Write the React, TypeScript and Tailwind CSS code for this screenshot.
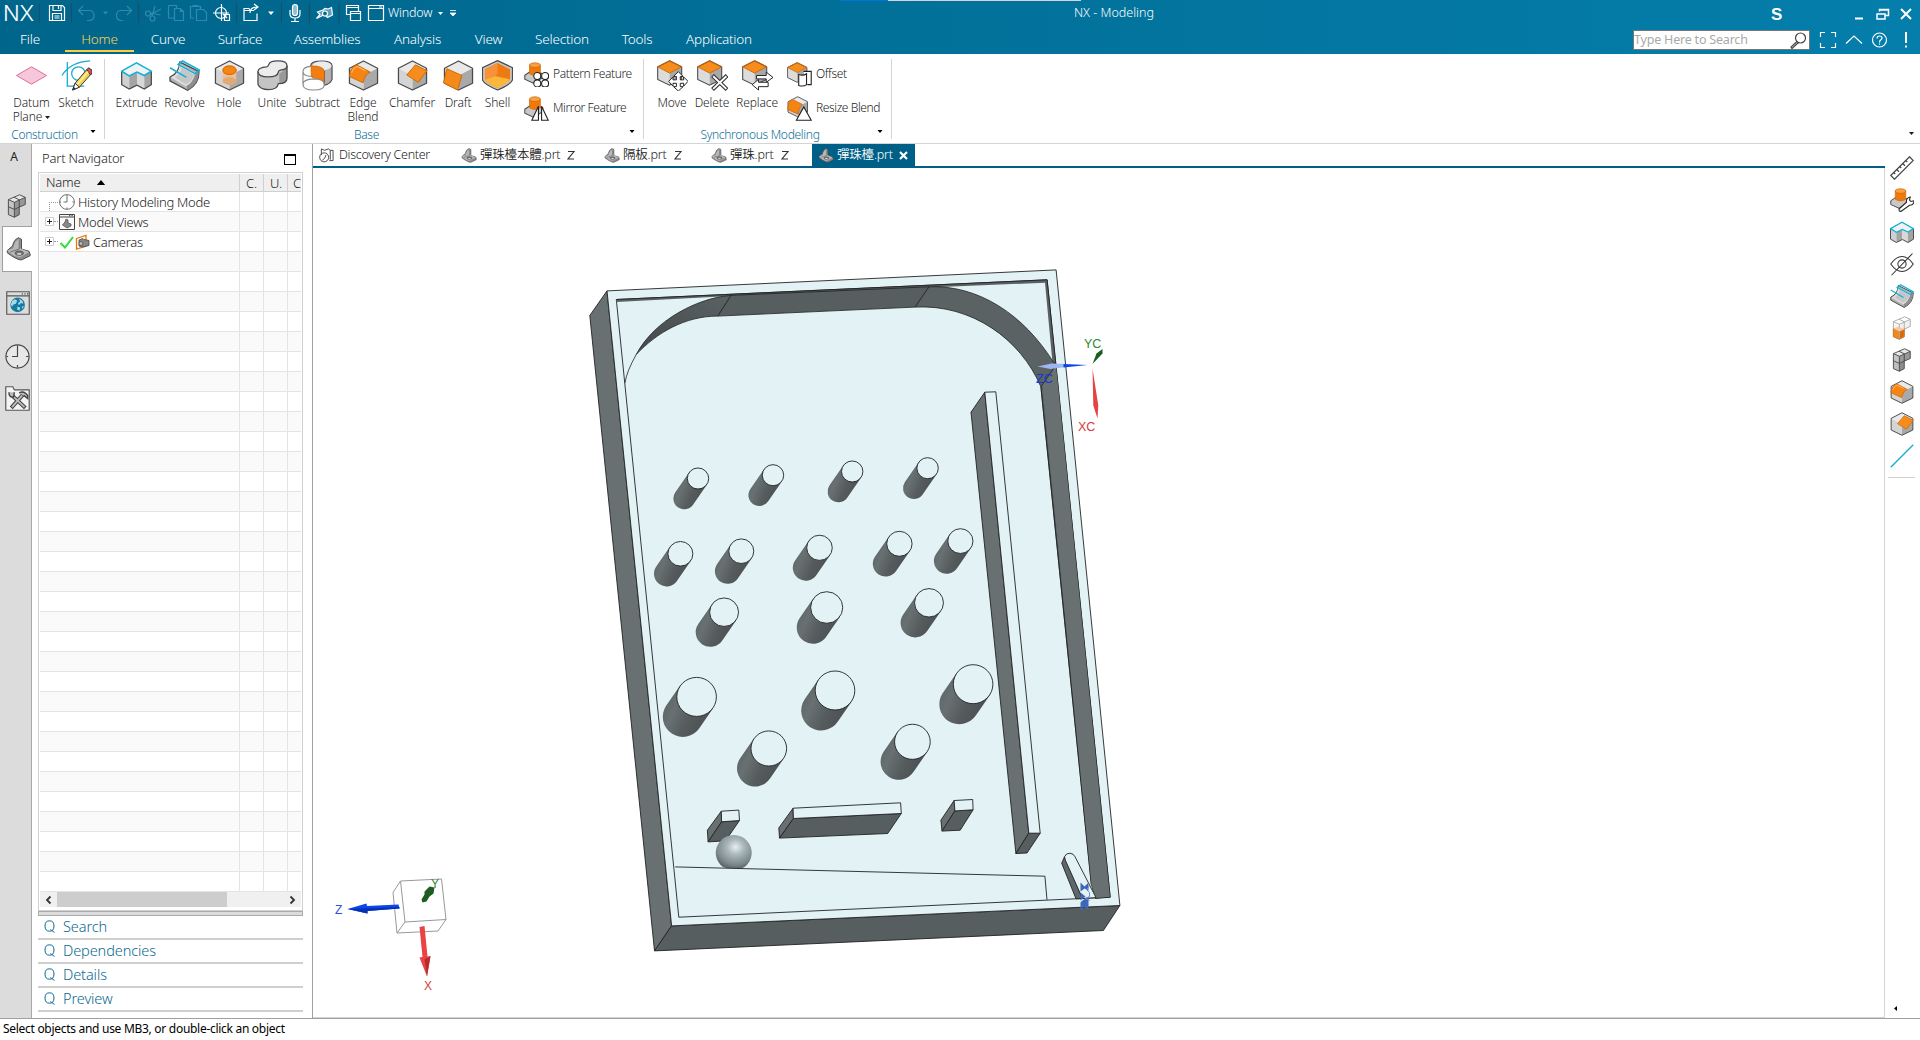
import React from "react";

type P = { className?: string };

const EDGE = "#4a4a4a";

/* ---------- icon building blocks (32 x 32 grid) ---------- */

function Cube({ top = "#e9e9e9", left = "#d4d4d4", right = "#a9a9a9" }: { top?: string; left?: string; right?: string }) {
  return (
    <g strokeLinejoin="round">
      <path d="M16 1L30.5 8.5 16 16 1.5 8.5Z" fill={top} />
      <path d="M1.5 8.5L16 16V31L1.5 24Z" fill={left} />
      <path d="M30.5 8.5L16 16V31L30.5 24Z" fill={right} />
      <path d="M16 1L30.5 8.5V24L16 31 1.5 24V8.5Z" fill="none" stroke={EDGE} strokeWidth="1.3" />
    </g>
  );
}

function Svg({ className, children, box = "0 0 32 32" }: P & { children: React.ReactNode; box?: string }) {
  return (
    <svg viewBox={box} className={className} fill="none">
      {children}
    </svg>
  );
}

const DatumIcon = ({ className }: P) => (
  <Svg className={className}>
    <path d="M.5 16L16 7 31.500 16 16 25Z" fill="#f6c6da" stroke="#e06a96" />
  </Svg>
);
const SketchIcon = ({ className }: P) => (
  <Svg className={className}>
    <g stroke="#19a8cf" strokeWidth="1.3">
      <path d="M6.5 2V27H24M1 16Q10 2 30 1" />
      <circle cx="18" cy="14" r="7" />
    </g>
    <path d="M12 31L14.500 24 26.500 10 31.500 14 19 28Z" fill="#f5d04c" stroke="#333" />
    <path d="M26.500 10L28.500 8 32 10.500V13.500L30.500 15.500Z" fill="#e04b4b" stroke="#333" />
    <path d="M12 31L14.500 24 19 28Z" fill="#fff" stroke="#333" />
    <path d="M12 31l1.500-3 1.500 1.500z" fill="#222" />
    <path d="M17 25L28 12" stroke="#fff3b0" strokeWidth="1.500" />
  </Svg>
);
const ExtrudeIcon = ({ className }: P) => (
  <Svg className={className}>
    <path d="M.5 11.500L16 3 31.500 11.500 24 16 16.500 12.500 8.500 16.500Z" fill="#f2f2f2" />
    <path d="M.5 11.500L8.500 16.500V30L.5 25.500Z" fill="#d0d0d0" />
    <path d="M8.500 16.500L16.500 12.500V26L8.500 30Z" fill="#a4a4a4" />
    <path d="M16.500 12.500L24 16V30L16.500 26Z" fill="#d8d8d8" />
    <path d="M24 16L31.500 11.500V25.500L24 30Z" fill="#a4a4a4" />
    <path d="M.7 12V25.500L8.500 30 16.500 26 24 30 31.300 25.500V12" stroke={EDGE} strokeWidth="1.300" />
    <path d="M.7 11.500L16 3 31.300 11.500 24 16 16.500 12.500 8.500 16.500Z" stroke="#10b0d8" strokeWidth="1.600" />
  </Svg>
);
const RevolveIcon = ({ className }: P) => (
  <Svg className={className}>
    <path d="M11 2L31 12Q31 25 19 31.300L1 21.500V17.500Q11 13 11 2Z" fill="#b4b4b4" stroke={EDGE} strokeWidth="1.300" strokeLinejoin="round" />
    <path d="M11 4L27 13Q24 25 17.500 27L2 18Q11 14 11 4Z" fill="#e0e0e0" />
    <path d="M13 8L26 15Q23 24 17 25L6 18Q12 14 13 8Z" fill="#c6c6c6" />
    <path d="M28 13Q25 24 18.500 26.500V31Q31 25 30.500 12Z" fill="#8d8d8d" />
    <path d="M9.500 4.500L14 1 31.500 10.500 27 14ZM1 8L18 18" stroke="#10b0d8" strokeWidth="1.600" />
  </Svg>
);
const HoleIcon = ({ className }: P) => (
  <Svg className={className}>
    <Cube />
    <path d="M9 10.500V23q7 5.500 14 0V10.500z" fill="#eebf94" />
    <path d="M9 20V23q7 5.500 14 0V20q-7-5-14 0z" fill="#e0aa78" />
    <ellipse cx="16" cy="10.500" rx="7" ry="4.500" fill="#f68512" stroke="#c96300" />
  </Svg>
);
const UniteIcon = ({ className }: P) => (
  <Svg className={className}>
    <path d="M1 12V25q5 6 13 5.500 7-.5 9-6 8-.5 8-6V5z" fill="#c4c4c4" />
    <path d="M23 14v10.500q8-.5 8-6V6q-2 5-8 8z" fill="#999" />
    <path
      d="M1 12q0-4.500 9-5 2-.5 2-2 1-4 9.500-4 9.500 0 9.500 5 0 4-7 4.500-2 .5-2 2-.5 5-10.500 5T1 12z"
      fill="#ececec"
      stroke={EDGE}
      strokeWidth="1.300"
    />
    <path d="M1 12V25q2 5.500 11 5.500 9 0 10-6 9 0 9-6V6" stroke={EDGE} strokeWidth="1.300" />
  </Svg>
);
const SubtractIcon = ({ className }: P) => (
  <Svg className={className}>
    <path d="M9 6q0-5 11-5t11 5V20q-2 5-8 6V12H9z" fill="#b0b0b0" stroke={EDGE} strokeWidth="1.200" />
    <ellipse cx="20.500" cy="6" rx="10" ry="4.500" fill="#ececec" />
    <path d="M9 6q14 0 14 6V26q0-5-5-6-9 0-9-4z" fill="#f37d10" stroke="#c96300" strokeWidth=".6" />
    <path d="M1 12q0-5 8-5.500V16q0 3 6 3.500 8 1 8 6-1 5.500-11 5.500T1 25z" fill="#fff" />
    <path d="M9 6.500Q1 7 1 12V25q0 6 11 6t11-5.500M1 12q0 5 11 5M1 25q0-5 11-5.500 11 0 11 6" stroke="#8a8a8a" strokeWidth="1.200" />
  </Svg>
);
const EdgeBlendIcon = ({ className }: P) => (
  <Svg className={className}>
    <Cube />
    <path d="M1.500 15.500Q3 7 9 5L23 12.500Q17.500 14.500 15.500 23.500L1.500 17Z" fill="#f68412" stroke="#c96300" strokeWidth=".9" />
    <path d="M3.500 13.500Q5.500 8 9.500 6.700L18 11" stroke="#ffb25c" strokeWidth="1.300" />
  </Svg>
);
const ChamferIcon = ({ className }: P) => (
  <Svg className={className}>
    <Cube />
    <path d="M10 15.500L19 5 31 11 22 23Z" fill="#f68c1e" stroke="#d06a00" />
  </Svg>
);
const DraftIcon = ({ className }: P) => (
  <Svg className={className}>
    <Cube />
    <path d="M4 9L19.500 16 15 31 .5 23.500Z" fill="#f58a1c" stroke="#d06a00" />
  </Svg>
);
const ShellIcon = ({ className }: P) => (
  <Svg className={className}>
    <path d="M16 .7L31.500 8V20.500Q30 25 16 31 2 25 .5 20.500V8Z" fill="#c8c8c8" stroke={EDGE} strokeWidth="1.300" />
    <path d="M16 3L29 9.500V20Q27 24 16 29 5 24 3 20V9.500Z" fill="#ee7a12" />
    <path d="M3 20L13 16.500 29 20Q27 24 16 29 5 24 3 20Z" fill="#fbb63c" />
    <path d="M16 3V14q-2 4-13 6V9.500z" fill="#f8923a" />
  </Svg>
);
const Base = () => (
  <g>
    <path d="M1 17L10 11 24 15V20L12 27 1 22Z" fill="#c8c8c8" stroke={EDGE} strokeWidth="1.300" />
    <path d="M7 4q7-4.500 14 0V15q-7 4.500-14 0z" fill="#f0790c" stroke="#c96300" strokeWidth=".8" />
    <ellipse cx="14" cy="4" rx="7" ry="3" fill="#f9a044" stroke="#c96300" strokeWidth=".8" />
  </g>
);
const PatternIcon = ({ className }: P) => (
  <Svg className={className}>
    <Base />
    <g fill="#fff" stroke="#222" strokeWidth="1.400">
      <circle cx="17" cy="18" r="4.500" />
      <circle cx="27" cy="18" r="4.500" />
      <circle cx="17" cy="27.500" r="4.500" />
      <circle cx="27" cy="27.500" r="4.500" />
    </g>
  </Svg>
);
const MirrorIcon = ({ className }: P) => (
  <Svg className={className}>
    <Base />
    <path d="M10 31L18.500 13V31ZM31 31L22.500 13V31Z" fill="#fff" stroke="#222" strokeWidth="1.400" />
  </Svg>
);
const OrangeCube = () => (
  <g>
    <path d="M13 1L25.500 7 13 13.500.7 7Z" fill="#f68c1c" />
    <path d="M.7 7L13 13.500V26L.7 20Z" fill="#dcdcdc" />
    <path d="M25.500 7L13 13.500V26L25.500 20Z" fill="#a8a8a8" />
    <path d="M13 .8L25.500 7V20L13 26 .7 20V7Z" stroke={EDGE} strokeWidth="1.100" />
    <path d="M13 .8L25.500 7 13 13.500.7 7Z" stroke="#cf6600" />
  </g>
);
const MoveIcon = ({ className }: P) => (
  <Svg className={className}>
    <OrangeCube />
    <path d="M22 12l5 5h-3v3.500h3.500v-3L32 22l-4.500 5v-3H24v3.500h3L22 32l-5-4.500h3V24h-3.500v3L12 22l4.500-4.500v3H20V17h-3z" fill="#fff" stroke="#222" />
  </Svg>
);
const DeleteIcon = ({ className }: P) => (
  <Svg className={className}>
    <OrangeCube />
    <path d="M16 16L31 30.500M31 16L16 30.500" stroke="#333" strokeWidth="4.200" />
    <path d="M16.700 16.700L30.300 29.800M30.300 16.700L16.700 29.800" stroke="#fff" strokeWidth="2" />
  </Svg>
);
const ReplaceIcon = ({ className }: P) => (
  <Svg className={className}>
    <OrangeCube />
    <path d="M15 16h10v-3.500l7 5.500-7 5v-3.500H15z" fill="#fff" stroke="#222" />
    <path d="M27 23H17v-3l-6.500 5.500L17 31v-3.500h10z" fill="#fff" stroke="#222" />
  </Svg>
);
const OffsetIcon = ({ className }: P) => (
  <Svg className={className}>
    <OrangeCube />
    <path d="M21 12h10v17l-5 0M15 16q6 2 10-1v14q-4 3-10 1z" fill="#fff" stroke="#222" strokeWidth="1.400" />
  </Svg>
);
const ResizeIcon = ({ className }: P) => (
  <Svg className={className}>
    <g transform="scale(.86)">
      <Cube />
      <path d="M1.500 17Q2 8 8 5L23 12.500Q17 17 16.500 27L1 20Z" fill="#f68412" stroke="#c96300" />
    </g>
    <path d="M12 31L21.500 14 31 31Z" fill="#fff" stroke="#222" strokeWidth="1.400" />
  </Svg>
);

/* three stacked boxes: two on top, one below */
const BlocksIcon = ({ className, ghost = false }: P & { ghost?: boolean }) => {
  const line = ghost ? "#a8a8a8" : "#454545";
  return (
    <Svg className={className}>
      <g strokeLinejoin="round">
        <path d="M4.500 17L12.500 20.500V31L4.500 27.500Z" fill={ghost ? "#f6861a" : "#bdbdbd"} />
        <path d="M12.500 20.500L19 17.500V27.500L12.500 31Z" fill={ghost ? "#dd6a00" : "#8d8d8d"} />
        <path d="M4.500 7.500L12.500 11V20.500L4.500 17Z" fill={ghost ? "#f6f6f6" : "#c4c4c4"} />
        <path d="M12.500 11L27 4.500V14L19 17.500 12.500 20.500Z" fill={ghost ? "#f1f1f1" : "#989898"} />
        <path d="M4.500 7.500L19.500 1 27 4.500 12.500 11Z" fill={ghost ? "#fff" : "#e6e6e6"} />
        <path
          d="M4.500 7.500L19.500 1 27 4.500V14L19 17.500V27.500L12.500 31 4.500 27.500ZM4.500 7.500L12.500 11 27 4.500M12.500 11V31M4.500 17L12.500 20.500 19 17.500V8M12 4.300L19.500 8"
          stroke={line}
          strokeWidth="1.200"
        />
        {ghost && <path d="M4.500 17L12.500 20.500 19 17.500V27.500L12.500 31 4.500 27.500Z" stroke="#d06a00" />}
        {ghost && <path d="M4.500 17L11 14 19 17.500 12.500 20.500Z" fill="#f8c79a" />}
      </g>
    </Svg>
  );
};
const PartIcon = ({ className }: P) => (
  <Svg className={className}>
    <path d="M1 18L8 12Q10 3 16 1l4 2v13l10 3 1.500 4V25L20 30.500Q14 31 1 21Z" fill="#8c8c8c" stroke="#4f4f4f" strokeWidth="1.300" />
    <path d="M1 18L9 15Q11 4 18 2v13L30 20 18 27Q10 27 1 18Z" fill="#b9b9b9" />
    <path d="M17 3v13L5 20" stroke="#666" strokeWidth="1.200" />
    <ellipse cx="17" cy="21.500" rx="5.500" ry="2.800" fill="#777" stroke="#444" />
    <ellipse cx="17" cy="22.500" rx="3" ry="1.300" fill="#ddd" />
  </Svg>
);
const GlobeIcon = ({ className }: P) => (
  <Svg className={className}>
    <path d="M1 1h30v30H1zM1 6.500h30" stroke="#555" strokeWidth="1.500" />
    <path d="M21 3.800h1.500m2 0H26m2 0h1.500" stroke="#444" strokeWidth="1.500" />
    <circle cx="15.500" cy="18.500" r="9.700" fill="#1779a0" />
    <path d="M8 13l4-2 3 2-2 4-3 1-2 3-1.500-3zM17 10l5 3 1 4-3-1-3 3-1-3 3-2zM15 21l4 1-1 4-3-1zM21 21l3-1-2 4z" fill="#a9d8e6" />
  </Svg>
);
const ClockIcon = ({ className }: P) => (
  <Svg className={className}>
    <circle cx="16" cy="16" r="14.800" fill="#fff" fillOpacity=".35" stroke="#444" strokeWidth="1.500" />
    <path d="M16 2v14H9M16 27v3M27 16h3M2 16h2" stroke="#444" strokeWidth="1.500" />
  </Svg>
);
const ToolsIcon = ({ className }: P) => (
  <Svg className={className}>
    <path d="M1 5V1h9l2 4h19v26H1z" fill="#f4f4f4" stroke="#555" strokeWidth="1.500" />
    <path d="M8 11L26 28M23 11L8 28" stroke="#444" strokeWidth="5" />
    <path d="M9 12L25 27M22 12L9 27" stroke="#bbb" strokeWidth="2.400" />
    <path d="M5 8q0 7 6 6l1-6M18 9q6-4 11 3v4l-5-4" stroke="#444" strokeWidth="1.800" fill="#bbb" />
  </Svg>
);
const RulerIcon = ({ className }: P) => (
  <Svg className={className}>
    <path d="M1 26L26 1 31 6 6 31Z" stroke="#444" strokeWidth="1.600" fill="#fff" />
    <path d="M5 22l2 2M9 18l3 3M13 14l2 2M17 10l3 3M21 6l2 2" stroke="#444" strokeWidth="1.500" />
  </Svg>
);
const EyeIcon = ({ className }: P) => (
  <Svg className={className}>
    <path d="M1 16Q8 6 16 6t15 10Q24 26 16 26T1 16ZM2 31L30 2" stroke="#333" strokeWidth="1.400" />
    <circle cx="16" cy="16" r="5.500" stroke="#333" strokeWidth="1.400" />
  </Svg>
);
const WrenchIcon = ({ className }: P) => (
  <Svg className={className}>
    <Base />
    <path d="M12 28L22 19q-1-6 5-7l-1 4 2 2 4-1q0 6-6 6L15 31q-3 1-3-3z" fill="#fff" stroke="#222" strokeWidth="1.400" />
  </Svg>
);
const LineIcon = ({ className }: P) => (
  <Svg className={className}>
    <path d="M1 31L31 1" stroke="#10a8d8" strokeWidth="1.600" />
  </Svg>
);

const Caret = ({ className }: P) => (
  <svg viewBox="0 0 5 3" className={className}>
    <path d="M0 0H5L2.500 3Z" fill="currentColor" />
  </svg>
);

/* ---------- quick access toolbar ---------- */

const Sep = () => <i className="h-5 w-px shrink-0 bg-[#1c4f66]" />;

function QuickBar() {
  return (
    <div className="flex h-[26px] items-center text-white">
      <span className="w-[39px] pl-[3px] font-['Inter'] text-[22px] leading-[27px] font-light tracking-[-0.3px]">NX</span>
      <Sep />
      <svg viewBox="0 0 382 24" className="h-6 w-[382px] shrink-0" fill="none" stroke="currentColor" strokeWidth="1.200">
        <path d="M9.500 4.500h13l2 2v13h-15zM13 4.500v5h8v-5M12.500 19v-6.500h9V19M14.500 15h5M14.500 17h5M18.500 5v3" />
        <path d="M31.500 2v20" stroke="#1c4f66" />
        <g stroke="#2f8aae">
          <path d="M43 5l-4.500 4.500L43 14M39 9.500h10q5 0 5 5t-5 5h-2M87 5l4.500 4.500L87 14M91 9.500H81q-4.500 0-4.500 5t5 5H83" />
          <circle cx="108" cy="12.500" r="2.500" />
          <circle cx="112.500" cy="17.500" r="2.500" />
          <path d="M110 14l11-6M112 15l3-10M110.500 12l10 2" />
          <path d="M128.500 4.500h8v3M134 17h-5.500V4.500M134.500 7.500h6l3 3v9h-9zM140.500 7.500v3h3M154 17h-3.500V5.500h10v3M153 6V4.500h5V6M156.500 8.500h7l3 3v8h-10z" />
        </g>
        <path d="M63 10.500h5l-2.500 3z" fill="#2f8aae" stroke="none" />
        <path d="M98.500 2v20" stroke="#1c4f66" />
        <circle cx="181" cy="12" r="5.500" />
        <path d="M181.500 3v17M173 12h16M184.500 13.500h5v6h-5zM183 13l4 4" />
        <path d="M196.500 2v20" stroke="#1c4f66" />
        <path d="M214 9.500h-10v10h13v-7M204 9V7.500h5L210 9M210 12q0-6 7-6M214 3l4 3-4 3" />
        <path d="M228 10.500h6l-3 3.500z" fill="#fff" stroke="none" />
        <path d="M241.500 2v20" stroke="#1c4f66" />
        <rect x="252.500" y="3.500" width="5" height="11" rx="2.500" fill="#8fc0d2" />
        <path d="M250 9v4q0 4 5 4t5-4V9M255 17v3M251 20.500h8" />
        <path d="M269.500 2v20" stroke="#1c4f66" />
        <path d="M276.500 17.500l3.500-4-2.500-2.500 5.500-2 2-1.500 3 .5 3.500-1.500 1 7.500-5 2.500-3-3-3 1.500z" fill="#5da0bb" />
        <circle cx="285" cy="12.500" r="2.500" fill="#02698f" />
        <path d="M299 2v20" stroke="#1c4f66" />
        <path d="M306.500 4.500h12v9h-12zM306 6.500h13" />
        <path d="M310.500 10.500h10v9h-10zM310 12.500h11" fill="#02698f" />
        <path d="M328.500 4.500h15v15h-15zM328 7.500h16M339 6h3" />
      </svg>
      <span className="-ml-[34px] w-[50px] text-[12.5px] font-light tracking-[-0.2px]">Window</span>
      <Caret className="h-[3px] w-[5px]" />
      <svg viewBox="0 0 6 6" className="ml-[7px] h-[6px] w-[6px]">
        <path d="M0 .5H6M0 3H6L3 6Z" stroke="#fff" fill="#fff" strokeWidth=".8" />
      </svg>
      <div className="ml-[384px] h-full w-[48px] shrink-0">
        <div className="h-px bg-[#0078d7]" />
      </div>
      <div className="h-full w-[193px] shrink-0">
        <div className="h-px bg-[#cfd6da]" />
      </div>
    </div>
  );
}

const menu: [string, string][] = [
  ["File", "w-[65px] pr-[5px]"],
  ["Home", "w-[69px] border-b-2 border-[#ffcd42] text-[#ffd04f]"],
  ["Curve", "w-[68px]"],
  ["Surface", "w-[76px]"],
  ["Assemblies", "w-[98px]"],
  ["Analysis", "w-[83px]"],
  ["View", "w-[59px]"],
  ["Selection", "w-[88px]"],
  ["Tools", "w-[62px]"],
  ["Application", "w-[102px]"],
];

function Header() {
  return (
    <header className="flex h-[54px] bg-linear-to-r from-[#00658b] to-[#057eab] text-white">
      <div className="w-[1081px] shrink-0">
        <QuickBar />
        <nav className="flex h-[26px]">
          {menu.map(([t, c]) => (
            <div key={t} className={`flex items-start justify-center pt-[3px] text-[13.5px] leading-[20px] font-[350] tracking-[-0.2px] ${c}`}>
              {t}
            </div>
          ))}
        </nav>
      </div>
      <div className="-ml-[7px] w-[559px] shrink-0 pt-[4px] text-[12.5px] font-[350] tracking-[0px]">NX - Modeling</div>
      <div className="w-[287px] shrink-0">
        <div className="flex h-[30px] items-center pb-[2px]">
          <b className="ml-[138px] w-[83px] pt-px font-['Liberation_Sans'] text-[17px]">S</b>
          <svg viewBox="0 0 62 16" className="h-4 w-[62px]" fill="none" stroke="#fff">
            <path d="M1 12.500h8" strokeWidth="2" />
            <path d="M25.500 5.500V3.500h9v6h-3M23 8h8v5h-8zM25 4h9.500" strokeWidth="1.500" />
            <path d="M47 3l10 10M57 3L47 13" strokeWidth="2" />
          </svg>
        </div>
        <div className="flex items-center">
          <div className="flex h-5 w-[177px] items-center justify-between border border-[#777] bg-white pr-[2px] text-[12.5px] tracking-[-0.2px] text-[#a9a9a9]">
            <span>Type Here to Search</span>
            <svg viewBox="0 0 17 17" className="h-[17px] w-[17px]" fill="none" stroke="#444" strokeWidth="1.200">
              <circle cx="10.500" cy="6" r="5" />
              <path d="M7 9.500L1 15l1 1.500 6.500-6" />
            </svg>
          </div>
          <svg viewBox="0 0 92 18" className="ml-[9px] h-[18px] w-[92px]" fill="none" stroke="#fff" strokeWidth="1.200">
            <path d="M1.500 6V1.500H6M12 1.500h4.500V6M16.500 12v4.500H12M6 16.500H1.500V12M27 12.500l8-7.500 8 7.500" />
            <circle cx="60.500" cy="9" r="7" />
            <path d="M58 7.500q0-2.500 2.500-2.500t2.500 2q0 1-1.300 2T60.500 11.500M60.500 12.500v1.300" />
            <path d="M87 1v11M87 14.500v2" strokeWidth="2" />
          </svg>
        </div>
      </div>
    </header>
  );
}

/* ---------- ribbon ---------- */

type Btn = { label: string; Icon: (p: P) => React.ReactElement; w: string; sub?: string; caret?: boolean };

function Big({ label, Icon, w, sub, caret }: Btn) {
  return (
    <div className={`flex shrink-0 flex-col items-center text-[12px] leading-[14px] font-[350] tracking-[-0.1px] whitespace-nowrap ${w}`}>
      <Icon className="mb-[5px] h-[31px] w-[31px] shrink-0" />
      <span>{label}</span>
      {sub && (
        <span className="flex items-center gap-[3px]">
          {sub}
          {caret && <Caret className="h-[3px] w-[5px]" />}
        </span>
      )}
    </div>
  );
}

function Small({ label, Icon }: { label: string; Icon: (p: P) => React.ReactElement }) {
  return (
    <div className="flex items-center gap-[4px] text-[12px] leading-[26px] font-[350] tracking-[-0.4px] whitespace-nowrap">
      <Icon className="h-[25px] w-[25px]" />
      {label}
    </div>
  );
}

function GroupLabel({ label, className }: { label: string; className: string }) {
  return (
    <div className="relative h-[14px] pt-[2px] text-center text-[12px] leading-[16px] font-[350] tracking-[-0.3px] text-[#0a6e96]">
      <span className={className}>{label}</span>
      <Caret className="absolute top-[5px] right-[8px] h-[3px] w-[6px] text-black" />
    </div>
  );
}

function Ribbon() {
  return (
    <section className="flex h-[90px] border-b-[1px] border-[#d4d4d4] bg-white pt-[5px] text-[#1c1c1c]">
      <div className="flex h-[80px] w-[105px] flex-col border-r border-[#d4d4d4]">
        <div className="flex h-[68px] pt-px pl-[10px]">
          <Big label="Datum" sub="Plane" caret Icon={DatumIcon} w="w-[43px]" />
          <Big label="Sketch" Icon={SketchIcon} w="w-[46px]" />
        </div>
        <GroupLabel label="Construction" className="mr-[15px]" />
      </div>
      <div className="flex h-[80px] w-[539px] flex-col border-r border-[#d4d4d4]">
        <div className="flex h-[68px] pt-px pl-[7px]">
          <Big label="Extrude" Icon={ExtrudeIcon} w="w-[49px]" />
          <Big label="Revolve" Icon={RevolveIcon} w="w-[47px]" />
          <Big label="Hole" Icon={HoleIcon} w="w-[42px]" />
          <Big label="Unite" Icon={UniteIcon} w="w-[44px]" />
          <Big label="Subtract" Icon={SubtractIcon} w="w-[47px]" />
          <Big label="Edge" sub="Blend" Icon={EdgeBlendIcon} w="w-[44px]" />
          <Big label="Chamfer" Icon={ChamferIcon} w="w-[54px]" />
          <Big label="Draft" Icon={DraftIcon} w="w-[38px]" />
          <Big label="Shell" Icon={ShellIcon} w="w-[41px]" />
          <div className="ml-[6px] flex flex-col gap-[8px] pt-px">
            <Small label="Pattern Feature" Icon={PatternIcon} />
            <Small label="Mirror Feature" Icon={MirrorIcon} />
          </div>
        </div>
        <GroupLabel label="Base" className="mr-[15px]" />
      </div>
      <div className="flex h-[80px] w-[248px] flex-col border-r border-[#d4d4d4]">
        <div className="flex h-[68px] pt-px pl-[5px]">
          <Big label="Move" Icon={MoveIcon} w="w-[46px]" />
          <Big label="Delete" Icon={DeleteIcon} w="w-[34px]" />
          <Big label="Replace" Icon={ReplaceIcon} w="w-[56px]" />
          <div className="ml-[2px] flex flex-col gap-[8px] pt-px">
            <Small label="Offset" Icon={OffsetIcon} />
            <Small label="Resize Blend" Icon={ResizeIcon} />
          </div>
        </div>
        <GroupLabel label="Synchronous Modeling" className="mr-[15px]" />
      </div>
      <Caret className="mt-[73px] mr-[6px] ml-auto h-[3px] w-[5px]" />
    </section>
  );
}

/* ---------- left side ---------- */

function ResourceBar() {
  return (
    <div className="flex w-[32px] shrink-0 flex-col items-center border-r border-[#a8a8a8] bg-[#dcdcdc]">
      <div className="mr-[3px] h-[50px] pt-[4px] text-[12px] leading-[18px]">A</div>
      <BlocksIcon className="ml-[5px] h-6 w-6 self-start" />
      <div className="mt-[8px] -mr-px flex h-[46px] w-[30px] items-center self-end border-y border-l border-[#a0a0a0] bg-white pl-[3px]">
        <PartIcon className="h-[24px] w-[25px]" />
      </div>
      <GlobeIcon className="mt-[19px] ml-[4px] h-6 w-6 shrink-0" />
      <ClockIcon className="mt-[29px] ml-[4px] h-[25px] w-[25px] shrink-0" />
      <ToolsIcon className="mt-[17px] ml-[4px] h-[25px] w-[25px] shrink-0" />
    </div>
  );
}

const Plus = () => (
  <svg viewBox="0 0 9 9" className="relative h-[9px] w-[9px] bg-white">
    <path d="M.5.500h8v8h-8z" stroke="#ccc" fill="#fff" />
    <path d="M2 4.500h5M4.500 2v5" stroke="#222" />
  </svg>
);

function TreeRow({ children, odd }: { children?: React.ReactNode; odd?: boolean }) {
  return (
    <div className={`flex h-5 shrink-0 border-b border-[#e4e4e4] text-[13px] leading-[18px] font-[350] tracking-[-0.3px] ${odd ? "bg-[#fafafa]" : "bg-white"}`}>
      <div className="flex w-[200px] items-center border-r border-[#e4e4e4]">{children}</div>
      <div className="w-[24px] border-r border-[#e4e4e4]" />
      <div className="w-[24px] border-r border-[#e4e4e4]" />
    </div>
  );
}

function Navigator() {
  return (
    <aside className="flex w-[281px] shrink-0 flex-col border-r border-[#a0a0a0] bg-white pl-[6px] text-[#1c1c1c]">
      <div className="flex h-[28px] items-center justify-between pt-[2px] pr-[16px] pl-[4px] text-[13px] font-[350] tracking-[-0.2px]">
        <span>Part Navigator</span>
        <i className="h-[11px] w-[12px] border border-t-2 border-black" />
      </div>
      <div className="flex h-[739px] w-[265px] flex-col overflow-hidden border border-[#d0d0d0] p-px">
        <div className="flex h-[18px] shrink-0 items-center border-b border-[#d0d0d0] bg-[#efefef] text-[13px] font-[350] tracking-[-0.2px]">
          <div className="flex h-full w-[200px] items-center border-r border-[#d0d0d0] pl-[6px]">
            Name
            <svg viewBox="0 0 10 6" className="ml-[16px] h-[5px] w-[10px]">
              <path d="M0 6L5 0 10 6Z" />
            </svg>
          </div>
          <div className="h-full w-[24px] border-r border-[#d0d0d0] pl-[6px] leading-[18px]">C.</div>
          <div className="h-full w-[24px] border-r border-[#d0d0d0] pl-[6px] leading-[18px]">U.</div>
          <div className="h-full w-[13px] overflow-hidden pl-[5px] leading-[18px]">C</div>
        </div>
        <div className="flex flex-1 flex-col overflow-hidden">
          <TreeRow>
            <i className="ml-[9px] h-[9px] w-[9px] translate-y-[5px] border-t border-l border-dotted border-[#999]" />
            <ClockIcon className="mr-[3px] ml-[1px] h-4 w-4" />
            History Modeling Mode
          </TreeRow>
          <TreeRow odd>
            <span className="ml-[5px]">
              <Plus />
            </span>
            <i className="mr-px w-[4px] border-t border-dotted border-[#999]" />
            <svg viewBox="0 0 16 16" className="mr-[3px] h-4 w-4" fill="none">
              <path d="M.5.500h15v15H.5zM.5 3h15" stroke="#444" />
              <path d="M3.500 11L6 8l1-3 2 1v3l3 1v2L8 14z" fill="#888" stroke="#555" strokeWidth=".8" />
              <path d="M10 1.700h4" stroke="#444" strokeDasharray="1 .6" />
            </svg>
            Model Views
          </TreeRow>
          <TreeRow>
            <span className="ml-[5px]">
              <Plus />
            </span>
            <i className="mr-px w-[4px] border-t border-dotted border-[#999]" />
            <svg viewBox="0 0 31 16" className="mr-[3px] h-4 w-[31px]" fill="none">
              <path d="M1.500 9L6 13.500 14 3" stroke="#2fdc3a" strokeWidth="2" />
              <path d="M17.500 4.500L27 1.500V12l-9.500 3z" stroke="#ee7410" strokeWidth="1.300" />
              <path d="M20 6l4-1.500 1 1 5 1v5L24 13l-4-1z" fill="#888" stroke="#444" strokeWidth=".8" />
              <circle cx="22" cy="9.500" r="2" fill="#bbb" stroke="#444" strokeWidth=".7" />
            </svg>
            Cameras
          </TreeRow>
          {Array.from({ length: 32 }, (_, i) => (
            <TreeRow key={i} odd={i % 2 === 0} />
          ))}
        </div>
        <div className="mb-[2px] flex h-[15px] shrink-0 items-center bg-[#f0f0f0] text-[#444]">
          <svg viewBox="0 0 16 14" className="h-[14px] w-[17px]" fill="none">
            <path d="M10 3.500L6.500 7l3.500 3.500" stroke="#333" strokeWidth="1.800" />
          </svg>
          <i className="h-full w-[170px] bg-[#cdcdcd]" />
          <svg viewBox="0 0 16 14" className="ml-auto h-[14px] w-[17px]" fill="none">
            <path d="M6 3.500L9.500 7 6 10.500" stroke="#333" strokeWidth="1.800" />
          </svg>
        </div>
      </div>
      <div className="h-[5px] w-[265px] border border-[#ababab] bg-[#dcdcdc]" />
      {["Search", "Dependencies", "Details", "Preview"].map((t) => (
        <div
          key={t}
          className="flex h-6 w-[265px] items-center gap-[7px] border-b-2 border-[#cfcfcf] pb-px pl-[6px] text-[14.5px] leading-[21px] font-[350] tracking-[-0.1px] text-[#0b6a91]"
        >
          <svg viewBox="0 0 12 13" className="h-[13px] w-[12px]" fill="none" stroke="#0b6a91">
            <path d="M5.500.8q4.500 0 4.500 5.200T5.500 11.200 1 6 5.500.8zM6.500 9.500l4 3" />
          </svg>
          {t}
        </div>
      ))}
    </aside>
  );
}

/* ---------- document tabs ---------- */

function DocTab({ title, w, active }: { title: string; w: string; active?: boolean }) {
  return (
    <div className={`flex h-[22px] items-center gap-[3px] pl-[6px] ${w} ${active ? "bg-[#005f87] text-white" : ""}`}>
      <PartIcon className="h-[15px] w-[16px] shrink-0" />
      <span className="whitespace-nowrap">{title}</span>
      {active ? (
        <svg viewBox="0 0 9 9" className="ml-[3px] h-[9px] w-[9px]">
          <path d="M1 1l7 7M8 1L1 8" stroke="#fff" strokeWidth="2.200" />
        </svg>
      ) : (
        <svg viewBox="0 0 8 10" className="ml-[4px] h-[10px] w-[8px]" fill="none">
          <path d="M1 1.500h6L1 9h6" stroke="#333" strokeWidth="1.100" />
        </svg>
      )}
    </div>
  );
}

function DocTabs() {
  return (
    <div className="flex h-[24px] border-b-2 border-[#005f87] bg-white text-[12.5px] font-[350] tracking-[-0.2px]">
      <div className="flex h-[22px] w-[142px] items-center gap-[5px] pl-[6px] tracking-[-0.3px]">
        <svg viewBox="0 0 16 16" className="h-4 w-[15px]" fill="none" stroke="#444">
          <path d="M2.500 8V1.500L6 3l4-1.500L12 3h3v11h-4M12 3v10" />
          <circle cx="5.500" cy="10.500" r="4.800" />
          <path d="M7.500 8L6 11.500l-2.500 2" />
        </svg>
        Discovery Center
      </div>
      <DocTab title="彈珠檯本體.prt" w="w-[143px]" />
      <DocTab title="隔板.prt" w="w-[107px]" />
      <DocTab title="彈珠.prt" w="w-[107px]" />
      <DocTab title="彈珠檯.prt" w="w-[103px]" active />
    </div>
  );
}

/* ---------- 3D view ---------- */

const pegs: [number, number, number][] = [
  [698.5, 479, 10.8],
  [773.5, 475.7, 10.8],
  [852.7, 472, 10.8],
  [928.1, 468.7, 10.8],
  [680.9, 554.3, 12.6],
  [741.8, 551.7, 12.6],
  [820, 548.3, 12.9],
  [899.9, 544.3, 12.8],
  [960.9, 541.6, 12.7],
  [724.6, 612.7, 14.6],
  [827.2, 608, 16.2],
  [929.5, 603.3, 14.6],
  [697.1, 697.4, 20],
  [835.5, 691, 20],
  [973.6, 684.7, 20],
  [769.3, 749, 18],
  [912.9, 742.3, 18],
];

function Peg({ x, y, r }: { x: number; y: number; r: number }) {
  const a = r * 0.834;
  const b = r * 0.552;
  const dx = -13.8;
  const dy = 20;
  return (
    <g>
      <path
        d={`M${x - a} ${y - b}L${x - a + dx} ${y - b + dy}A${r} ${r} 0 0 0 ${x + a + dx} ${y + b + dy}L${x + a} ${y + b}Z`}
        fill="url(#pegShade)"
      />
      <ellipse cx={x} cy={y} rx={r * 0.99} ry={r * 0.975} fill="#e2f2f5" stroke="#222" strokeWidth=".9" />
    </g>
  );
}

function Viewport() {
  return (
    <svg viewBox="313.500 168.500 1571 849" className="h-[849px] w-[1571px] bg-white" strokeLinejoin="round">
      <defs>
        <linearGradient id="pegShade" x1="0" y1=".3" x2="1" y2=".75">
          <stop offset="0" stopColor="#5c6466" />
          <stop offset=".25" stopColor="#687072" />
          <stop offset=".55" stopColor="#565c5e" />
          <stop offset="1" stopColor="#484d50" />
        </linearGradient>
        <linearGradient id="arcL" x1="0" y1="1" x2="1" y2="0">
          <stop offset="0" stopColor="#44484b" />
          <stop offset="1" stopColor="#5a6264" />
        </linearGradient>
        <radialGradient id="ball" cx=".55" cy=".36" r=".65">
          <stop offset="0" stopColor="#e8eff0" />
          <stop offset=".35" stopColor="#abb9bc" />
          <stop offset=".8" stopColor="#7d898b" />
          <stop offset="1" stopColor="#5f696b" />
        </radialGradient>
      </defs>

      {/* tray */}
      <g stroke="#222" strokeWidth=".9">
        <path d="M607.500 291.400L672.100 926.400 655 951.400 590.300 316Z" fill="#687072" />
        <path d="M672.100 926.400L1120.400 906 1103.900 931 655 951.400Z" fill="#565e60" />
        <path d="M607.500 291.400L1056.600 270.400 1120.400 906 672.100 926.400Z" fill="#e2f2f5" />
        <path d="M616.800 300L1047.600 280.300 1110.700 897.700 679.300 917.700Z" fill="#e2f2f5" />
      </g>

      {/* inner walls */}
      <path d="M616.800 300L1047.600 280.300 1056.300 363.600 1053 363.600 1045.500 283.200 929.500 288.100 731.500 296.500 617 302.600Z" fill="#596163" />
      <g stroke="#222" strokeWidth=".8">
        <path d="M731.500 296C700 297.800 655 320 636.800 354.900 657 333.600 685 316.600 718.400 316.600Z" fill="url(#arcL)" />
        <path d="M731.500 295.900L929.500 287.300 915.700 307.600 718.400 316.600Z" fill="#565e60" />
        <path
          d="M929.500 287.300C978 285.200 1024 314.200 1054.500 363.600L1056.300 363.600 1110.700 897.700 1096 899 1091.800 885 1041.400 387.300C1021 339.400 972 304.500 915.700 307.600Z"
          fill="#5a6264"
        />
        <path d="M1041.400 387.300L1056 366M1041.400 387.300L1091.800 885" fill="none" />
        <path d="M636.800 354.900Q627 372.300 625.500 383.400" fill="none" />
      </g>
      <path d="M616.800 300L1047.600 280.300 1056.300 363.600" fill="none" stroke="#222" strokeWidth=".9" />
      <path d="M1043 386L1056.500 367 1110.300 897.300 1096 898.300 1092 885Z" fill="#687072" />

      {pegs.map(([x, y, r], i) => (
        <Peg key={i} x={x} y={y} r={r} />
      ))}

      {/* lane divider and bumpers */}
      <g stroke="#222" strokeWidth=".9">
        <path d="M985.300 392.700L971.500 412.700 1016.400 854 1029.300 833.700Z" fill="#687072" />
        <path d="M1029.300 833.700L1040.700 833.700 1027.500 853.500 1016.400 854Z" fill="#565e60" />
        <path d="M985.300 392.700L996.300 392.300 1040.700 833.700 1029.300 833.700Z" fill="#e2f2f5" />

        <path d="M721.800 811.700L707.900 830.700 708.600 842.400 722.100 822.300Z" fill="#687072" />
        <path d="M722.100 822.300L740 821 726 841.300 708.600 842.400Z" fill="#565e60" />
        <path d="M721.800 811.700L739.300 810.600 740 821 722.100 822.300Z" fill="#e2f2f5" />

        <path d="M793.600 808.700L779.300 828.400 780 838.600 793.900 819Z" fill="#687072" />
        <path d="M793.900 819L901.800 814 888.200 834 780 838.600Z" fill="#565e60" />
        <path d="M793.600 808.700L901.100 803.300 901.800 814 793.900 819Z" fill="#e2f2f5" />

        <path d="M954.600 801L941.400 820.700 942.500 831.600 955.400 811.400Z" fill="#687072" />
        <path d="M955.400 811.400L973.600 810.300 960.700 830.700 942.500 831.600Z" fill="#565e60" />
        <path d="M954.600 801L973.200 800 973.600 810.300 955.400 811.400Z" fill="#e2f2f5" />
      </g>

      {/* ball on the ramp */}
      <path d="M723.500 867.500A18 17.700 0 1 1 745 867.500L742 868.900 727 868.500Z" fill="url(#ball)" />
      <path d="M675.700 867.400L1045.400 876.700 1047.500 900.300" fill="none" stroke="#222" strokeWidth=".9" />

      {/* plunger */}
      <g stroke="#222" strokeWidth=".9">
        <path d="M1065 857.200L1062.200 863.700 1076.500 899.300 1083 899Z" fill="#5f6769" />
        <path d="M1065 857.200Q1066.500 853.500 1070.500 853.700 1074 854 1075.500 857.200L1096.500 898.100 1083 899 1066 861Z" fill="#e2f2f5" />
      </g>
      <path d="M1081 883l4 4 4-4v8l-4-2-4 3zM1081 893l5 4-5 4zM1083 901l6-4v13l-6-3v4h-2v-8z" fill="#3f66b8" />
      <path d="M1090 887l-3 3 3 3v4l-4 2 4 2" stroke="#6f8fd0" fill="none" />

      {/* work coordinate system */}
      <g fontFamily="Liberation Sans, sans-serif" fontSize="12.500">
        <path d="M1038 367L1052 364 1066 364.500 1066 367.500 1051 369.500Z" fill="#9db5f2" />
        <path d="M1064 364.500L1088 365.500 1064 368Z" fill="#0a45ee" />
        <path d="M1093 369L1098.800 406 1098 419 1093.800 406Z" fill="#e54242" />
        <path d="M1093 364.500L1097 354 1103 349.500 1103 354Z" fill="#1b5f20" />
        <text x="1084.500" y="348.500" fill="#2c8a32">YC</text>
        <text x="1036.500" y="383" fill="#1238d8">ZC</text>
        <text x="1078.500" y="431.500" fill="#d83a3a">XC</text>
      </g>

      {/* view triad */}
      <g fill="none" stroke="#999">
        <path d="M401 881.500L442 879.500 446.500 920 405.500 922.500ZM401 881.500L393.500 893 397.500 933.500 405.500 922.500M397.500 933.500L438.500 931.500 446.500 920" />
      </g>
      <path d="M348 909.500L367 904 367.500 906.500 399 905 400 909 368 911.500 368 914Z" fill="#0b46f0" />
      <path d="M348 909.500L368 914 368 911.500 400 909V907.500Z" fill="#0632b0" />
      <path d="M420 927.500L425 926.500 428 957 431 956.500 427.500 977 420 958 423 957.500Z" fill="#e94343" />
      <path d="M425 960L431 956.500 427.500 977Z" fill="#b92b2b" />
      <path d="M422 900L425 895 425 892 430 887 435 888 434 894 430 897 427 902 423 903Z" fill="#1d5d21" />
      <g fontFamily="Liberation Sans, sans-serif" fontSize="12">
        <text x="335.500" y="914" fill="#2b50e8">Z</text>
        <text x="424.500" y="990" fill="#d84040">X</text>
        <text x="431.500" y="888" fill="#2c8a32">Y</text>
      </g>
    </svg>
  );
}

function RightBar() {
  const c = "h-6 w-6 shrink-0";
  return (
    <div className="flex w-[35px] shrink-0 flex-col items-center gap-[8px] bg-white pt-[12px] pr-[2px]">
      <RulerIcon className={c} />
      <WrenchIcon className={c} />
      <ExtrudeIcon className={c} />
      <EyeIcon className={c} />
      <RevolveIcon className={c} />
      <BlocksIcon ghost className={c} />
      <BlocksIcon className={c} />
      <EdgeBlendIcon className={c} />
      <ChamferIcon className={c} />
      <LineIcon className={c} />
      <i className="mt-[1px] h-px w-[27px] bg-[#d0d0d0]" />
      <svg viewBox="0 0 3 5" className="mt-auto mr-[13px] mb-[7px] h-[5px] w-[3px]">
        <path d="M3 0V5L0 2.500Z" />
      </svg>
    </div>
  );
}

export default function App() {
  return (
    <div className="flex h-[1040px] w-[1920px] flex-col overflow-hidden bg-white font-['Noto_Sans','Noto_Sans_CJK_TC',sans-serif] text-[#222]">
      <Header />
      <Ribbon />
      <main className="flex h-[874px] shrink-0">
        <ResourceBar />
        <Navigator />
        <div className="flex w-[1572px] flex-col">
          <DocTabs />
          <div className="flex-1 border-r border-b border-[#d4d4d4]">
            <Viewport />
          </div>
        </div>
        <RightBar />
      </main>
      <footer className="h-[22px] border-t border-[#a0a0a0] pl-[3px] text-[12px] leading-[19px] tracking-[-0.29px] text-black">
        Select objects and use MB3, or double-click an object
      </footer>
    </div>
  );
}
